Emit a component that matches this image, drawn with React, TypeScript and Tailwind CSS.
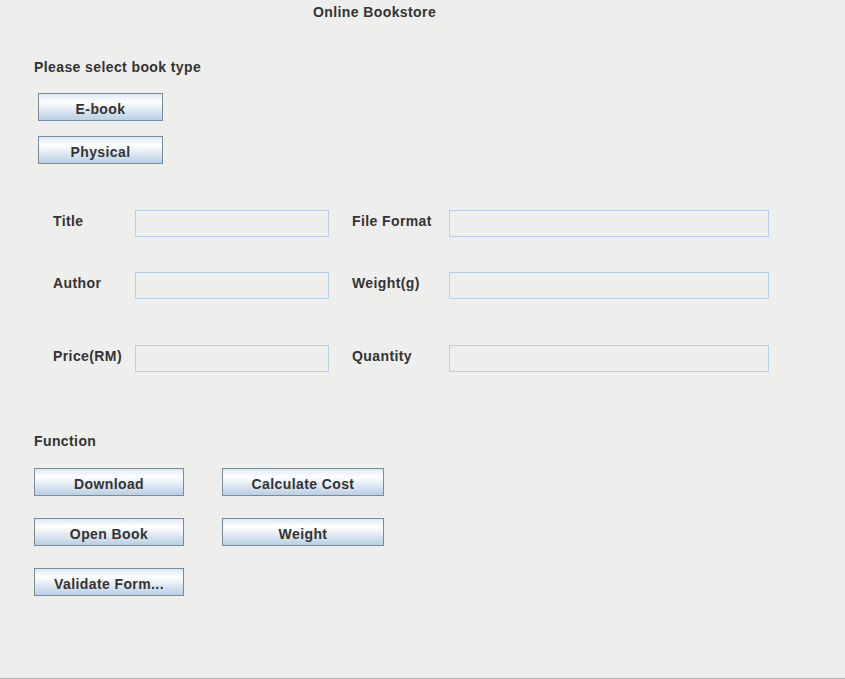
const font = { fontFamily: '"Liberation Sans", Arial, sans-serif' };

function SwingButton({ label, width }: { label: string; width: string }) {
  return (
    <button
      className={`${width} h-[28px] pt-[3px] border border-[#7a8a99] bg-[linear-gradient(to_bottom,#dde8f3_0%,#ffffff_30%,#e6eef6_55%,#b8cfe5_100%)] text-[14px] font-bold text-[#333333] tracking-[0.4px] leading-4 flex items-center justify-center`}
    >
      {label}
    </button>
  );
}

function Field({ width }: { width: string }) {
  return <div className={`${width} h-[27px] border border-[#b8cfe5] bg-[#eeeeec]`} />;
}

function FormRow({
  left,
  right,
  top,
}: {
  left: string;
  right: string;
  top: string;
}) {
  return (
    <div className={`flex items-start ${top}`}>
      <div className="ml-[53px] w-[82px] mt-[3px] leading-4">{left}</div>
      <Field width="w-[194px]" />
      <div className="ml-[23px] w-[97px] mt-[3px] leading-4">{right}</div>
      <Field width="w-[320px]" />
    </div>
  );
}

export default function App() {
  return (
    <div
      className="w-[845px] h-[679px] bg-[#eeeeec] border-b border-[#b3b3b3] text-[14px] font-bold text-[#333333] tracking-[0.4px] flex flex-col"
      style={font}
    >
      <div className="pl-[313px] pt-[4px] leading-4">Online Bookstore</div>

      <div className="pl-[34px] mt-[39px] leading-4">Please select book type</div>

      <div className="pl-[38px] mt-[18px] flex flex-col gap-[15px]">
        <SwingButton label="E-book" width="w-[125px]" />
        <SwingButton label="Physical" width="w-[125px]" />
      </div>

      <FormRow left="Title" right="File Format" top="mt-[46px]" />
      <FormRow left="Author" right="Weight(g)" top="mt-[35px]" />
      <FormRow left="Price(RM)" right="Quantity" top="mt-[46px]" />

      <div className="pl-[34px] mt-[61px] leading-4">Function</div>

      <div className="pl-[34px] mt-[19px] grid grid-cols-[150px_162px] gap-x-[38px] gap-y-[22px] w-fit">
        <SwingButton label="Download" width="w-[150px]" />
        <SwingButton label="Calculate Cost" width="w-[162px]" />
        <SwingButton label="Open Book" width="w-[150px]" />
        <SwingButton label="Weight" width="w-[162px]" />
        <SwingButton label="Validate Form..." width="w-[150px]" />
      </div>
    </div>
  );
}
